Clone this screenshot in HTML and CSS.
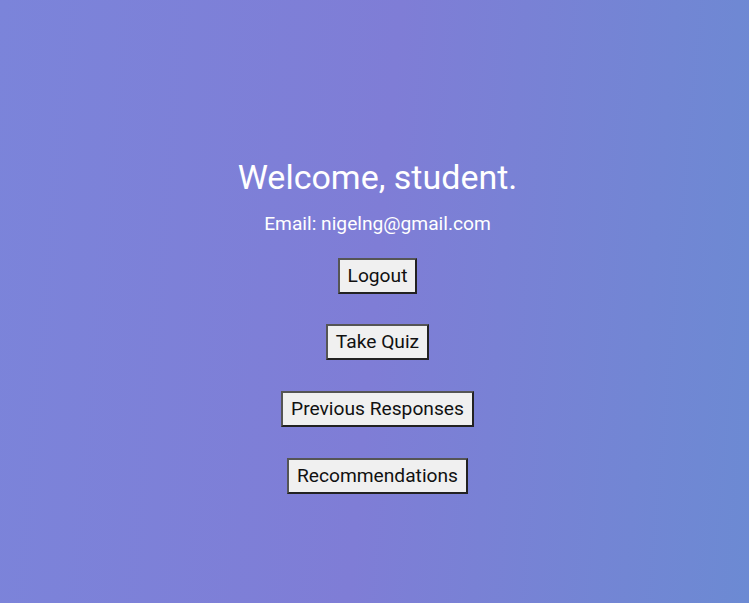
FILE: index.html
```html
<!DOCTYPE html>
<html lang="en">
<head>
<meta charset="utf-8">
<title>Dashboard</title>
<link rel="stylesheet" href="styles.css">
</head>
<body>
<main class="page">
  <h1 class="title">Welcome, student.</h1>
  <p class="email">Email: nigelng@gmail.com</p>
  <div class="actions">
    <button class="btn">Logout</button>
    <button class="btn">Take Quiz</button>
    <button class="btn">Previous Responses</button>
    <button class="btn">Recommendations</button>
  </div>
</main>
</body>
</html>
```

FILE: styles.css
```css
html, body {
  margin: 0;
  padding: 0;
  height: 100%;
}
body {
  font-family: Roboto, "Liberation Sans", Arial, sans-serif;
  background: linear-gradient(95deg, #7b84da 0%, #7f7dd6 50%, #6c8ad3 100%);
  color: #ffffff;
}
.page {
  min-height: 100%;
  box-sizing: border-box;
  padding: 157px 0 0 6px;
  display: flex;
  flex-direction: column;
  align-items: center;
  text-align: center;
}
.title {
  margin: 0;
  font-size: 34px;
  font-weight: 400;
  line-height: 40px;
}
.email {
  margin: 14.5px 0 0;
  font-size: 19.2px;
  line-height: 24px;
}
.actions {
  margin-top: 22px;
  display: flex;
  flex-direction: column;
  align-items: center;
  gap: 30.7px;
}
.btn {
  font-family: Roboto, "Liberation Sans", Arial, sans-serif;
  font-size: 19.2px;
  line-height: 24px;
  padding: 4px 8px;
  color: #111;
  background: #f0f0f0;
  border: 2px solid;
  border-color: #555 #222 #222 #555;
  border-radius: 0;
}
```
